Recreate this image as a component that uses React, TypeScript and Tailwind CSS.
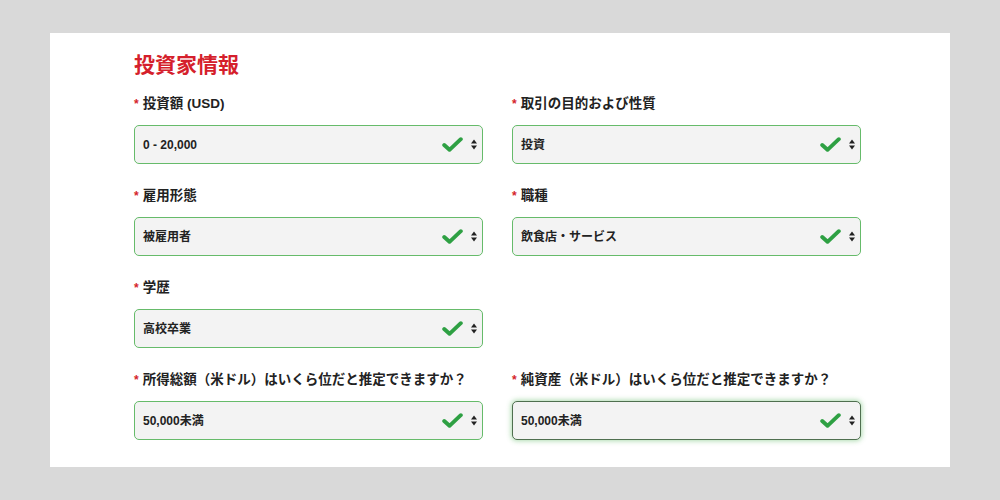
import React from "react";

const font = { fontFamily: '"Liberation Sans", "Noto Sans CJK JP", sans-serif' };

function Check() {
  return (
    <svg width="21" height="15" viewBox="0 0 21 15" className="shrink-0">
      <path d="M2.2 8 L7.5 12.8 L18.8 2.2" fill="none" stroke="#2ea043" strokeWidth="3.9" strokeLinecap="round" strokeLinejoin="round" />
    </svg>
  );
}

function Arrows() {
  return (
    <svg width="6" height="11" viewBox="0 0 6 11" className="shrink-0">
      <path d="M0 4.5 L3 0.5 L6 4.5 Z" fill="#222" />
      <path d="M0 6.5 L3 10.5 L6 6.5 Z" fill="#222" />
    </svg>
  );
}

function Field({ label, value, focused }: { label: string; value: string; focused?: boolean }) {
  return (
    <div className="flex flex-col">
      <div className="h-5 flex items-center text-[13.5px] font-bold text-[#222] leading-5">
        <span className="text-[#d51f2c] mr-1 text-[12px]">*</span>
        {label}
      </div>
      <div
        className={
          "mt-[11px] h-[39px] rounded-[5px] bg-[#f3f3f3] flex items-center pl-2 pr-[5px] border-[1.5px] " +
          (focused
            ? "border-[#4f6f4f] shadow-[0_0_5px_1px_rgba(76,175,80,0.45)]"
            : "border-[#66bb6a]")
        }
      >
        <span className="flex-1 text-[12px] font-bold text-[#222]">{value}</span>
        <Check />
        <span className="ml-[8px] flex items-center"><Arrows /></span>
      </div>
    </div>
  );
}

export default function App() {
  return (
    <div className="w-[1000px] h-[500px] bg-[#d9d9d9] pt-[33px]" style={font}>
      <div className="mx-[50px] h-[434px] bg-white pt-[18px] pl-[84px] pr-[89px]">
        <h1 className="h-[28px] leading-[28px] text-[21px] font-bold text-[#d51f2c] mb-[15px]">投資家情報</h1>
        <div className="grid grid-cols-[349px_349px] gap-x-[29px] gap-y-[22px]">
          <Field label="投資額 (USD)" value="0 - 20,000" />
          <Field label="取引の目的および性質" value="投資" />
          <Field label="雇用形態" value="被雇用者" />
          <Field label="職種" value="飲食店・サービス" />
          <Field label="学歴" value="高校卒業" />
          <div />
          <Field label="所得総額（米ドル）はいくら位だと推定できますか？" value="50,000未満" />
          <Field label="純資産（米ドル）はいくら位だと推定できますか？" value="50,000未満" focused />
        </div>
      </div>
    </div>
  );
}
